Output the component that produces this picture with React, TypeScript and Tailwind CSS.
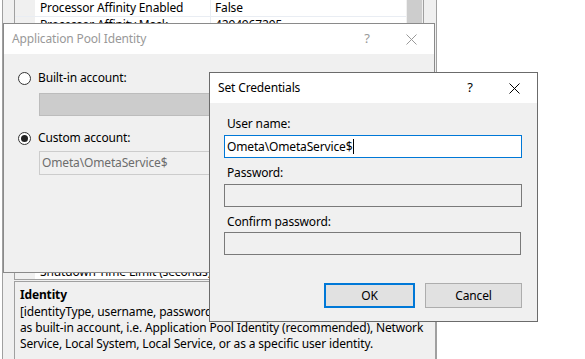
import React from "react";

const font = { fontFamily: '"Noto Sans", "Segoe UI", sans-serif' };

function CloseIcon({ color }: { color: string }) {
  return (
    <svg width="11" height="11" viewBox="0 0 11 11">
      <path d="M0.5 0.5 L10.5 10.5 M10.5 0.5 L0.5 10.5" stroke={color} strokeWidth="1" fill="none" />
    </svg>
  );
}

function TitleBar({ title, active }: { title: string; active: boolean }) {
  const c = active ? "text-black" : "text-[#999999]";
  return (
    <div className="flex h-[30px] items-center bg-white">
      <span className={`pl-[8px] text-[12px] leading-[16px] ${c}`}>{title}</span>
      <div className="ml-auto flex h-full items-center">
        <div className={`flex w-[42px] justify-center text-[13px] ${c}`}>?</div>
        <div className="flex w-[46px] justify-center">
          <CloseIcon color={active ? "#000000" : "#999999"} />
        </div>
      </div>
    </div>
  );
}

function Radio({ checked }: { checked: boolean }) {
  return (
    <div className="flex h-[13px] w-[13px] items-center justify-center rounded-full border border-[#333333] bg-white">
      {checked && <div className="h-[7px] w-[7px] rounded-full bg-[#222222]" />}
    </div>
  );
}

function GridRow({ name, value }: { name: string; value: string }) {
  return (
    <div className="flex h-[17px] border-b border-[#e9edf3] text-[12px] leading-[16px] text-black">
      <div className="w-[20px] bg-[#f0f0f0]" />
      <div className="w-[176px] overflow-hidden whitespace-nowrap border-r border-[#e9edf3] bg-white pl-[5px]">{name}</div>
      <div className="w-[195px] overflow-hidden whitespace-nowrap bg-white pl-[4px]">{value}</div>
    </div>
  );
}

export default function App() {
  return (
    <div className="relative h-[359px] w-[585px] overflow-hidden bg-white tracking-[-0.15px]" style={font}>
      {/* background window */}
      <div className="absolute left-[2px] top-0 flex h-[359px] w-[435px] flex-col border-l border-r border-[#a0a0a0] bg-[#f0f0f0]">
        <div className="ml-[11px] flex h-[280px] w-[410px] border-b border-l border-r border-[#a0a0a0] bg-white">
          <div className="flex w-[391px] flex-col">
            <GridRow name="Processor Affinity Enabled" value="False" />
            <GridRow name="Processor Affinity Mask" value="4294967295" />
            <div className="flex flex-1">
              <div className="w-[20px] bg-[#f0f0f0]" />
              <div className="w-[176px] border-r border-[#e9edf3]" />
            </div>
            <div className="flex h-[15px] text-[12px] leading-[15px] text-black">
              <div className="w-[20px] bg-[#f0f0f0]" />
              <div className="w-[176px] overflow-hidden whitespace-nowrap border-r border-[#e9edf3] bg-white pl-[5px]">
                Shutdown Time Limit (seconds)
              </div>
              <div className="w-[195px] bg-white pl-[4px]">90</div>
            </div>
          </div>
          <div className="flex w-[17px] flex-col bg-[#f0f0f0] px-px">
            <div className="h-[60px] bg-[#cdcdcd]" />
          </div>
        </div>
        <div className="ml-[11px] mt-px flex-1 overflow-hidden border-l border-r border-t border-[#a0a0a0] bg-[#f0f0f0] pl-[5px] pt-[5px] text-[12px] text-black">
          <div className="h-[16px] font-bold leading-[16px]">Identity</div>
          <div className="mt-px whitespace-nowrap leading-[16px]">
            [identityType, username, password] Configures the application pool to run
          </div>
          <div className="whitespace-nowrap leading-[16px]">
            as built-in account, i.e. Application Pool Identity (recommended), Network
          </div>
          <div className="whitespace-nowrap leading-[16px]">
            Service, Local System, Local Service, or as a specific user identity.
          </div>
        </div>
      </div>

      {/* Application Pool Identity dialog */}
      <div className="absolute left-[3px] top-[23px] flex h-[250px] w-[432px] flex-col border border-[#8a8a8a] bg-[#f0f0f0]">
        <TitleBar title="Application Pool Identity" active={false} />
        <div className="flex flex-col pl-[14px] pt-[16px] text-[12px] leading-[16px] text-black">
          <div className="flex h-[16px] items-center gap-[7px]">
            <Radio checked={false} />
            <span>Built-in account:</span>
          </div>
          <div className="ml-[21px] mt-[7px] h-[23px] w-[380px] border border-[#bcbcbc] bg-[#cccccc]" />
          <div className="mt-[14px] flex h-[16px] items-center gap-[7px]">
            <Radio checked={true} />
            <span>Custom account:</span>
          </div>
          <div className="ml-[21px] mt-[5px] flex h-[24px] w-[380px] items-center border border-[#cccccc] bg-[#f0f0f0] pl-[2px] text-[#6d6d6d]">
            Ometa\OmetaService$
          </div>
        </div>
      </div>

      {/* Set Credentials dialog */}
      <div className="absolute left-[209px] top-[72px] flex h-[250px] w-[329px] flex-col border border-[#6b6b6b] bg-[#f0f0f0]">
        <TitleBar title="Set Credentials" active={true} />
        <div className="flex flex-col pl-[14px] pr-[15px] text-[12px] leading-[16px] text-black">
          <div className="mt-[13px] pl-[3px]">User name:</div>
          <div className="mt-[3px] flex h-[23px] items-center border border-[#0078d7] bg-white pl-[2px]">
            <span>Ometa\OmetaService$</span>
            <span className="ml-px h-[15px] w-px bg-black" />
          </div>
          <div className="mt-[7px] pl-[3px]">Password:</div>
          <div className="mt-[3px] h-[23px] border border-[#7a7a7a] bg-[#f0f0f0]" />
          <div className="mt-[7px] pl-[3px]">Confirm password:</div>
          <div className="mt-[2px] h-[23px] w-[297px] border border-[#7a7a7a] bg-[#f0f0f0]" />
          <div className="mt-[28px] flex justify-end gap-[10px]">
            <div className="flex h-[25px] w-[91px] items-center justify-center border-2 border-[#0078d7] bg-[#e1e1e1]">OK</div>
            <div className="flex h-[25px] w-[97px] items-center justify-center border border-[#adadad] bg-[#e1e1e1]">Cancel</div>
          </div>
        </div>
      </div>
    </div>
  );
}
